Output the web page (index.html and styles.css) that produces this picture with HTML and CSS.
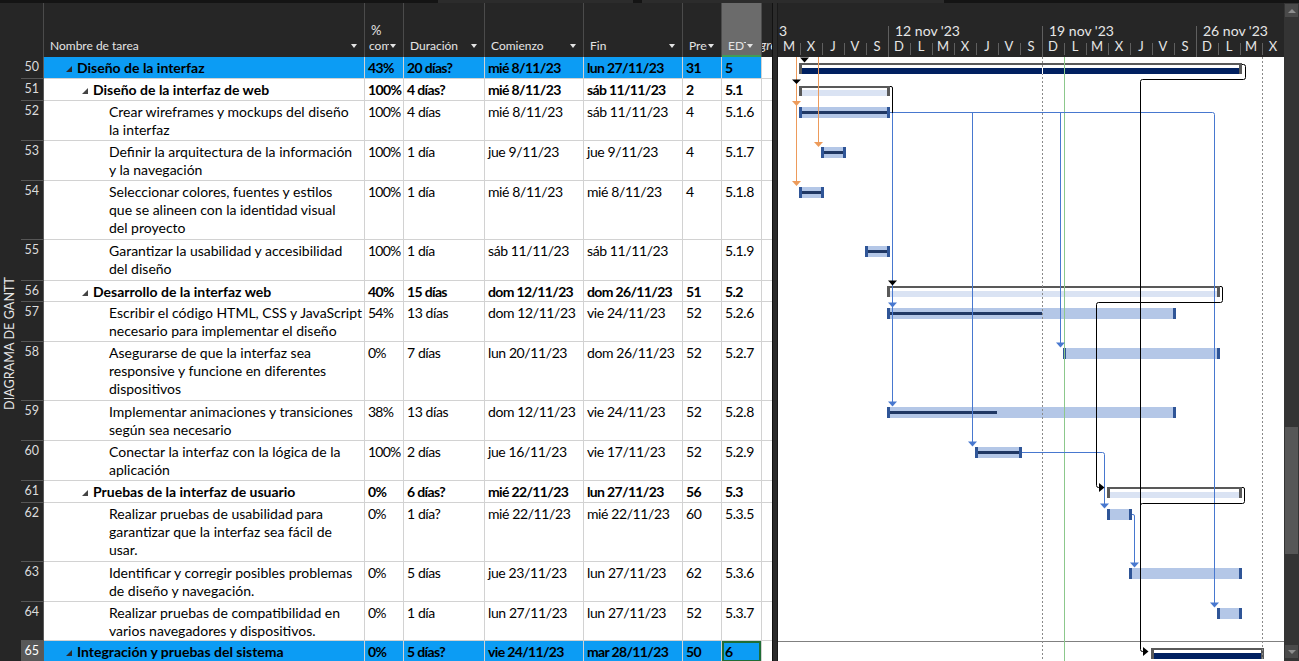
FILE: index.html
```html
<!DOCTYPE html>
<html lang="es">
<head>
<meta charset="utf-8">
<title>Diagrama de Gantt</title>
<link rel="stylesheet" href="styles.css">
</head>
<body>
<div class="app">
  <div class="topbar"><div class="seg seg1"></div><div class="seg seg2"></div></div>
  <div class="main">
    <div class="sheet">
      <div class="thead">
        <div class="corner"></div>
        <div class="th c-name"><div class="line"><span class="lbl">Nombre de tarea</span><span class="dd"></span></div></div>
        <div class="th c-pct"><div class="top">%</div><div class="line"><span class="lbl">completado</span><span class="dd"></span></div></div>
        <div class="th c-dur"><div class="line"><span class="lbl">Duración</span><span class="dd"></span></div></div>
        <div class="th c-start"><div class="line"><span class="lbl">Comienzo</span><span class="dd"></span></div></div>
        <div class="th c-fin"><div class="line"><span class="lbl">Fin</span><span class="dd"></span></div></div>
        <div class="th c-pre"><div class="line"><span class="lbl">Predecesoras</span><span class="dd"></span></div></div>
        <div class="th c-edt sel"><div class="line"><span class="lbl">EDT</span><span class="dd"></span></div></div>
        <div class="th c-add"><div class="line"><span class="lbl add">gre</span></div></div>
      </div>
      <div class="tbody">
        <div class="vlabel"><span>DIAGRAMA DE GANTT</span></div>
        <div class="rows">
          <div class="row h1 sel sum">
            <div class="num">50</div>
            <div class="td c-name l1"><span class="tri"></span>Diseño de la interfaz</div>
            <div class="td c-pct">43%</div><div class="td c-dur">20 días?</div><div class="td c-start">mié 8/11/23</div><div class="td c-fin">lun 27/11/23</div><div class="td c-pre">31</div><div class="td c-edt">5</div><div class="td c-add"></div>
          </div>
          <div class="row h1 sum">
            <div class="num">51</div>
            <div class="td c-name l2"><span class="tri"></span>Diseño de la interfaz de web</div>
            <div class="td c-pct">100%</div><div class="td c-dur">4 días?</div><div class="td c-start">mié 8/11/23</div><div class="td c-fin">sáb 11/11/23</div><div class="td c-pre">2</div><div class="td c-edt">5.1</div><div class="td c-add"></div>
          </div>
          <div class="row h2">
            <div class="num">52</div>
            <div class="td c-name l3">Crear wireframes y mockups del diseño<br>la interfaz</div>
            <div class="td c-pct">100%</div><div class="td c-dur">4 días</div><div class="td c-start">mié 8/11/23</div><div class="td c-fin">sáb 11/11/23</div><div class="td c-pre">4</div><div class="td c-edt">5.1.6</div><div class="td c-add"></div>
          </div>
          <div class="row h2">
            <div class="num">53</div>
            <div class="td c-name l3">Definir la arquitectura de la información<br>y la navegación</div>
            <div class="td c-pct">100%</div><div class="td c-dur">1 día</div><div class="td c-start">jue 9/11/23</div><div class="td c-fin">jue 9/11/23</div><div class="td c-pre">4</div><div class="td c-edt">5.1.7</div><div class="td c-add"></div>
          </div>
          <div class="row h3">
            <div class="num">54</div>
            <div class="td c-name l3">Seleccionar colores, fuentes y estilos<br>que se alineen con la identidad visual<br>del proyecto</div>
            <div class="td c-pct">100%</div><div class="td c-dur">1 día</div><div class="td c-start">mié 8/11/23</div><div class="td c-fin">mié 8/11/23</div><div class="td c-pre">4</div><div class="td c-edt">5.1.8</div><div class="td c-add"></div>
          </div>
          <div class="row h2 tall">
            <div class="num">55</div>
            <div class="td c-name l3">Garantizar la usabilidad y accesibilidad<br>del diseño</div>
            <div class="td c-pct">100%</div><div class="td c-dur">1 día</div><div class="td c-start">sáb 11/11/23</div><div class="td c-fin">sáb 11/11/23</div><div class="td c-pre"></div><div class="td c-edt">5.1.9</div><div class="td c-add"></div>
          </div>
          <div class="row h1 short sum">
            <div class="num">56</div>
            <div class="td c-name l2"><span class="tri"></span>Desarrollo de la interfaz web</div>
            <div class="td c-pct">40%</div><div class="td c-dur">15 días</div><div class="td c-start">dom 12/11/23</div><div class="td c-fin">dom 26/11/23</div><div class="td c-pre">51</div><div class="td c-edt">5.2</div><div class="td c-add"></div>
          </div>
          <div class="row h2">
            <div class="num">57</div>
            <div class="td c-name l3">Escribir el código HTML, CSS y JavaScript<br>necesario para implementar el diseño</div>
            <div class="td c-pct">54%</div><div class="td c-dur">13 días</div><div class="td c-start">dom 12/11/23</div><div class="td c-fin">vie 24/11/23</div><div class="td c-pre">52</div><div class="td c-edt">5.2.6</div><div class="td c-add"></div>
          </div>
          <div class="row h3">
            <div class="num">58</div>
            <div class="td c-name l3">Asegurarse de que la interfaz sea<br>responsive y funcione en diferentes<br>dispositivos</div>
            <div class="td c-pct">0%</div><div class="td c-dur">7 días</div><div class="td c-start">lun 20/11/23</div><div class="td c-fin">dom 26/11/23</div><div class="td c-pre">52</div><div class="td c-edt">5.2.7</div><div class="td c-add"></div>
          </div>
          <div class="row h2">
            <div class="num">59</div>
            <div class="td c-name l3">Implementar animaciones y transiciones<br>según sea necesario</div>
            <div class="td c-pct">38%</div><div class="td c-dur">13 días</div><div class="td c-start">dom 12/11/23</div><div class="td c-fin">vie 24/11/23</div><div class="td c-pre">52</div><div class="td c-edt">5.2.8</div><div class="td c-add"></div>
          </div>
          <div class="row h2">
            <div class="num">60</div>
            <div class="td c-name l3">Conectar la interfaz con la lógica de la<br>aplicación</div>
            <div class="td c-pct">100%</div><div class="td c-dur">2 días</div><div class="td c-start">jue 16/11/23</div><div class="td c-fin">vie 17/11/23</div><div class="td c-pre">52</div><div class="td c-edt">5.2.9</div><div class="td c-add"></div>
          </div>
          <div class="row h1 sum">
            <div class="num">61</div>
            <div class="td c-name l2"><span class="tri"></span>Pruebas de la interfaz de usuario</div>
            <div class="td c-pct">0%</div><div class="td c-dur">6 días?</div><div class="td c-start">mié 22/11/23</div><div class="td c-fin">lun 27/11/23</div><div class="td c-pre">56</div><div class="td c-edt">5.3</div><div class="td c-add"></div>
          </div>
          <div class="row h3">
            <div class="num">62</div>
            <div class="td c-name l3">Realizar pruebas de usabilidad para<br>garantizar que la interfaz sea fácil de<br>usar.</div>
            <div class="td c-pct">0%</div><div class="td c-dur">1 día?</div><div class="td c-start">mié 22/11/23</div><div class="td c-fin">mié 22/11/23</div><div class="td c-pre">60</div><div class="td c-edt">5.3.5</div><div class="td c-add"></div>
          </div>
          <div class="row h2">
            <div class="num">63</div>
            <div class="td c-name l3">Identificar y corregir posibles problemas<br>de diseño y navegación.</div>
            <div class="td c-pct">0%</div><div class="td c-dur">5 días</div><div class="td c-start">jue 23/11/23</div><div class="td c-fin">lun 27/11/23</div><div class="td c-pre">62</div><div class="td c-edt">5.3.6</div><div class="td c-add"></div>
          </div>
          <div class="row h2 short">
            <div class="num">64</div>
            <div class="td c-name l3">Realizar pruebas de compatibilidad en<br>varios navegadores y dispositivos.</div>
            <div class="td c-pct">0%</div><div class="td c-dur">1 día</div><div class="td c-start">lun 27/11/23</div><div class="td c-fin">lun 27/11/23</div><div class="td c-pre">52</div><div class="td c-edt">5.3.7</div><div class="td c-add"></div>
          </div>
          <div class="row h1 sel sum cur">
            <div class="num">65</div>
            <div class="td c-name l1"><span class="tri"></span>Integración y pruebas del sistema</div>
            <div class="td c-pct">0%</div><div class="td c-dur">5 días?</div><div class="td c-start">vie 24/11/23</div><div class="td c-fin">mar 28/11/23</div><div class="td c-pre">50</div><div class="td c-edt active">6</div><div class="td c-add"></div>
          </div>
        </div>
      </div>
    </div>

    <div class="splitter"></div>

    <div class="gantt">
      <div class="tscale">
        <div class="tier1">
          <div class="wk first">3</div>
          <div class="wk">12 nov '23</div>
          <div class="wk">19 nov '23</div>
          <div class="wk last">26 nov '23</div>
        </div>
        <div class="tier2">
          <div class="day nosep">M</div><div class="day">X</div><div class="day">J</div><div class="day">V</div><div class="day">S</div>
          <div class="day wk0">D</div><div class="day">L</div><div class="day">M</div><div class="day">X</div><div class="day">J</div><div class="day">V</div><div class="day">S</div>
          <div class="day wk0">D</div><div class="day">L</div><div class="day">M</div><div class="day">X</div><div class="day">J</div><div class="day">V</div><div class="day">S</div>
          <div class="day wk0">D</div><div class="day">L</div><div class="day">M</div><div class="day">X</div>
        </div>
      </div>
      <div class="chart">
        <svg class="chart-svg" width="506" height="604" viewBox="0 0 506 604">
          <g shape-rendering="crispEdges">
            <line x1="0" y1="584.5" x2="506" y2="584.5" stroke="#808080"/>
            <!-- row 50 summary -->
            <rect x="21" y="6" width="443" height="2" fill="#595959"/>
            <rect x="24" y="11" width="437" height="6" fill="#002060"/>
            <rect x="21" y="6" width="3" height="11" fill="#595959"/>
            <rect x="461" y="6" width="3" height="11" fill="#595959"/>
            <!-- row 51 summary -->
            <rect x="21" y="29" width="91" height="2" fill="#595959"/>
            <rect x="24" y="33" width="85" height="6" fill="#dae3f3"/>
            <rect x="21" y="29" width="3" height="10" fill="#595959"/>
            <rect x="109" y="29" width="3" height="10" fill="#595959"/>
            <!-- row 52 -->
            <rect x="21" y="50" width="91" height="11" fill="#b4c7e7"/>
            <rect x="24" y="54" width="85" height="3" fill="#203864"/>
            <rect x="21" y="50" width="3" height="11" fill="#2f5597"/>
            <rect x="109" y="50" width="3" height="11" fill="#2f5597"/>
            <!-- row 53 -->
            <rect x="43" y="90" width="25" height="11" fill="#b4c7e7"/>
            <rect x="46" y="94" width="19" height="3" fill="#203864"/>
            <rect x="43" y="90" width="3" height="11" fill="#2f5597"/>
            <rect x="65" y="90" width="3" height="11" fill="#2f5597"/>
            <!-- row 54 -->
            <rect x="21" y="130" width="25" height="11" fill="#b4c7e7"/>
            <rect x="24" y="134" width="19" height="3" fill="#203864"/>
            <rect x="21" y="130" width="3" height="11" fill="#2f5597"/>
            <rect x="43" y="130" width="3" height="11" fill="#2f5597"/>
            <!-- row 55 -->
            <rect x="87" y="189" width="25" height="11" fill="#b4c7e7"/>
            <rect x="90" y="193" width="19" height="3" fill="#203864"/>
            <rect x="87" y="189" width="3" height="11" fill="#2f5597"/>
            <rect x="109" y="189" width="3" height="11" fill="#2f5597"/>
            <!-- row 56 summary -->
            <rect x="109" y="229" width="333" height="2" fill="#595959"/>
            <rect x="112" y="234" width="327" height="6" fill="#dae3f3"/>
            <rect x="109" y="229" width="3" height="11" fill="#595959"/>
            <rect x="439" y="229" width="3" height="11" fill="#595959"/>
            <!-- row 57 -->
            <rect x="109" y="251" width="289" height="11" fill="#b4c7e7"/>
            <rect x="112" y="255" width="152" height="3" fill="#203864"/>
            <rect x="109" y="251" width="3" height="11" fill="#2f5597"/>
            <rect x="395" y="251" width="3" height="11" fill="#2f5597"/>
            <!-- row 58 -->
            <rect x="285" y="291" width="157" height="11" fill="#b4c7e7"/>
            <rect x="285" y="291" width="3" height="11" fill="#2f5597"/>
            <rect x="439" y="291" width="3" height="11" fill="#2f5597"/>
            <!-- row 59 -->
            <rect x="109" y="350" width="289" height="11" fill="#b4c7e7"/>
            <rect x="112" y="354" width="107" height="3" fill="#203864"/>
            <rect x="109" y="350" width="3" height="11" fill="#2f5597"/>
            <rect x="395" y="350" width="3" height="11" fill="#2f5597"/>
            <!-- row 60 -->
            <rect x="197" y="390" width="47" height="11" fill="#b4c7e7"/>
            <rect x="200" y="394" width="41" height="3" fill="#203864"/>
            <rect x="197" y="390" width="3" height="11" fill="#2f5597"/>
            <rect x="241" y="390" width="3" height="11" fill="#2f5597"/>
            <!-- row 61 summary -->
            <rect x="329" y="430" width="135" height="2" fill="#595959"/>
            <rect x="332" y="435" width="129" height="6" fill="#dae3f3"/>
            <rect x="329" y="430" width="3" height="11" fill="#595959"/>
            <rect x="461" y="430" width="3" height="11" fill="#595959"/>
            <!-- row 62 -->
            <rect x="329" y="452" width="25" height="11" fill="#b4c7e7"/>
            <rect x="329" y="452" width="3" height="11" fill="#2f5597"/>
            <rect x="351" y="452" width="3" height="11" fill="#2f5597"/>
            <!-- row 63 -->
            <rect x="351" y="511" width="113" height="11" fill="#b4c7e7"/>
            <rect x="351" y="511" width="3" height="11" fill="#2f5597"/>
            <rect x="461" y="511" width="3" height="11" fill="#2f5597"/>
            <!-- row 64 -->
            <rect x="439" y="551" width="25" height="11" fill="#b4c7e7"/>
            <rect x="439" y="551" width="3" height="11" fill="#2f5597"/>
            <rect x="461" y="551" width="3" height="11" fill="#2f5597"/>
            <!-- row 65 summary -->
            <rect x="373" y="591" width="113" height="2" fill="#595959"/>
            <rect x="376" y="596" width="107" height="6" fill="#002060"/>
            <rect x="373" y="591" width="3" height="11" fill="#595959"/>
            <rect x="483" y="591" width="3" height="11" fill="#595959"/>
            <!-- gridlines -->
            <line x1="264.5" y1="0" x2="264.5" y2="604" stroke="#8a8a8a" stroke-dasharray="2 2"/>
            <line x1="484.5" y1="0" x2="484.5" y2="604" stroke="#8a8a8a" stroke-dasharray="2 2"/>
            <rect x="264" y="11" width="1" height="6" fill="#ffffff"/>
            <line x1="286.5" y1="0" x2="286.5" y2="604" stroke="#8cc88c"/>
          </g>
          <g fill="none" stroke-width="1">
            <path d="M18.5 0V124M40.5 0V85" stroke="#ed9b5b"/>
            <path d="M112 55.5H434.5Q436.5 55.5 436.5 57.5V546M114.5 55.5V345M194.5 55.5V385M282.5 55.5V286" stroke="#4878cf"/>
            <path d="M244 395.5H324.5Q326.5 395.5 326.5 397.5V447" stroke="#4878cf"/>
            <path d="M354 457.5H355Q356.5 457.5 356.5 459V506" stroke="#4878cf"/>
            <path d="M112 29.5H113Q114.5 29.5 114.5 31V56" stroke="#000"/>
            <path d="M464 7.5H465.5Q467.5 7.5 467.5 9.5V20.5Q467.5 22.5 465.5 22.5H364.5Q362.5 22.5 362.5 24.5V592.5Q362.5 594.5 364.5 594.5H366" stroke="#000"/>
            <path d="M442 229.5H443Q444.5 229.5 444.5 231V243.5Q444.5 245.5 442.5 245.5H320.5Q318.5 245.5 318.5 247.5V428.5Q318.5 430.5 320.5 430.5H322" stroke="#000"/>
            <path d="M464 430.5H465Q466.5 430.5 466.5 432V444.5Q466.5 446.5 464.5 446.5H364.5Q362.5 446.5 362.5 448.5" stroke="#000"/>
          </g>
          <g>
            <polygon points="14,44 23,44 18.5,49" fill="#ed9b5b"/>
            <polygon points="14,124 23,124 18.5,129" fill="#ed9b5b"/>
            <polygon points="36,85 45,85 40.5,90" fill="#ed9b5b"/>
            <polygon points="22,0.5 31,0.5 26.5,5.5" fill="#000"/>
            <polygon points="14,22.5 23,22.5 18.5,27" fill="#000"/>
            <polygon points="110,223.5 119,223.5 114.5,228.5" fill="#000"/>
            <polygon points="321,426 321,435 326.5,430.5" fill="#000"/>
            <polygon points="365,590 365,599 370.5,594.5" fill="#000"/>
            <polygon points="110,245.5 119,245.5 114.5,250.5" fill="#4878cf"/>
            <polygon points="110,344.5 119,344.5 114.5,349.5" fill="#4878cf"/>
            <polygon points="190,384.5 199,384.5 194.5,389.5" fill="#4878cf"/>
            <polygon points="278,285.5 287,285.5 282.5,290.5" fill="#4878cf"/>
            <polygon points="432,545.5 441,545.5 436.5,550.5" fill="#4878cf"/>
            <polygon points="322,446.5 331,446.5 326.5,451.5" fill="#4878cf"/>
            <polygon points="352,505.5 361,505.5 356.5,510.5" fill="#4878cf"/>
          </g>
        </svg>
      </div>
    </div>

    <div class="vscroll">
      <div class="sb-btn up"><span class="sb-arrow up"></span></div>
      <div class="sb-thumb"></div>
      <div class="sb-btn down"><span class="sb-arrow down"></span></div>
    </div>
  </div>
</div>
</body>
</html>
```

FILE: styles.css
```css
* { box-sizing: border-box; }

html, body {
  margin: 0;
  padding: 0;
}

body {
  width: 1299px;
  height: 661px;
  overflow: hidden;
  background: #262626;
  font-family: Lato, "Liberation Sans", sans-serif;
}

.app {
  display: flex;
  flex-direction: column;
  width: 1299px;
  height: 661px;
}

/* thin strip on top */
.topbar {
  height: 3px;
  background: #141414;
  display: flex;
  flex: none;
}
.topbar .seg { background: #2c2c2c; }
.topbar .seg1 { margin-left: 438px; width: 195px; }
.topbar .seg2 { margin-left: 9px; width: 302px; }

.main {
  display: flex;
  height: 658px;
}

/* ---------- sheet ---------- */
.sheet {
  width: 772px;
  flex: none;
  display: flex;
  flex-direction: column;
}

.thead {
  height: 54px;
  flex: none;
  display: flex;
  background: #262626;
}

.corner {
  width: 44px;
  flex: none;
  border-right: 1px solid #4b4b4b;
}

.th {
  flex: none;
  display: flex;
  flex-direction: column;
  justify-content: flex-end;
  padding: 0 0 3px 6px;
  border-right: 1px solid #4b4b4b;
  color: #e4e4e4;
  font-size: 12px;
  overflow: hidden;
}
.th .top {
  line-height: 18px;
  margin-bottom: -3px;
  padding-left: 2px;
  font-size: 13px;
}
.th .line {
  display: flex;
  align-items: center;
  height: 18px;
}
.th .lbl {
  flex: 1;
  min-width: 0;
  overflow: hidden;
  white-space: nowrap;
}
.th .lbl.add {
  font-style: italic;
  margin-left: -2px;
}
.dd {
  flex: none;
  width: 0;
  height: 0;
  border-left: 3.5px solid transparent;
  border-right: 3.5px solid transparent;
  border-top: 4px solid #e4e4e4;
  margin: 2px 7px 0 1px;
}
.th.c-pct { padding-left: 4px; }
.th.sel {
  background: #6b6b6b;
  box-shadow: inset 0 -2px 0 #3f9d57;
}
.th.sel .dd { margin-right: 8px; }
.th.c-add {
  padding-left: 0;
  border-right: none;
  font-size: 13px;
}

/* column widths */
.c-name  { width: 321px; }
.c-pct   { width: 39px; }
.c-dur   { width: 81px; }
.c-start { width: 99px; }
.c-fin   { width: 99px; }
.c-pre   { width: 39px; }
.c-edt   { width: 40px; }
.c-add   { width: 10px; }

.tbody {
  flex: 1;
  display: flex;
  min-height: 0;
}

.vlabel {
  width: 21px;
  flex: none;
  background: #262626;
  display: flex;
  align-items: center;
  justify-content: center;
  padding: 0 2px 32px 0;
}
.vlabel span {
  writing-mode: vertical-rl;
  transform: rotate(180deg);
  color: #e6e6e6;
  font-size: 12.5px;
  letter-spacing: 0.1px;
  white-space: nowrap;
}

.rows {
  flex: 1;
  display: flex;
  flex-direction: column;
  overflow: hidden;
  background: #fff;
}

.row {
  display: flex;
  flex: none;
  height: 22px;
}
.row.h2 { height: 40px; }
.row.h3 { height: 59px; }
.row.h2.tall { height: 41px; }
.row.h1.short { height: 21px; }
.row.h2.short { height: 39px; }

.num {
  width: 23px;
  flex: none;
  background: #262626;
  color: #dcdcdc;
  font-size: 12.5px;
  line-height: 18px;
  text-align: right;
  padding: 1px 4px 0 0;
  border-bottom: 1px solid #565656;
  border-right: 1px solid #5a5a5a;
}
.row.cur .num {
  background: #585858;
  color: #ffffff;
}

.td {
  flex: none;
  background: #fff;
  color: #000;
  font-size: 14px;
  line-height: 18px;
  padding: 2px 0 0 3px;
  white-space: nowrap;
  overflow: hidden;
  border-right: 1px solid #d2d2d2;
  border-bottom: 1px solid #d2d2d2;
  letter-spacing: -0.4px;
}
.td.c-name { letter-spacing: 0; }
.td.c-pct { letter-spacing: -0.8px; }
.td.c-name.l1 { padding-left: 22px; }
.td.c-name.l2 { padding-left: 38px; }
.td.c-name.l3 { padding-left: 65px; }
.td.c-add { border-right: none; }

.row.sum .td { font-weight: 700; letter-spacing: -0.65px; }
.row.sum .td.c-name { letter-spacing: 0; }
.row.sel .td { background: #0c9cf4; }
.row.sel .td.c-add { background: #fff; }
.td.active { box-shadow: inset 0 0 0 2px #1f6d35; }

.tri {
  display: inline-block;
  width: 6px;
  height: 6px;
  margin-right: 5px;
  vertical-align: 1px;
  background: #444;
  clip-path: polygon(100% 0, 100% 100%, 0 100%);
}
.row.sel .tri { background: #2a2a2a; }

/* ---------- splitter ---------- */
.splitter {
  width: 6px;
  flex: none;
  background: #2b2b2b;
  border-left: 1px solid #121212;
  border-right: 1px solid #1a1a1a;
}

/* ---------- gantt ---------- */
.gantt {
  width: 506px;
  flex: none;
  display: flex;
  flex-direction: column;
}

.tscale {
  height: 54px;
  flex: none;
  background: #262626;
  color: #e6e6e6;
  font-size: 13px;
  overflow: hidden;
}
.tier1 {
  height: 36px;
  display: flex;
  align-items: flex-end;
  font-size: 14px;
}
.wk {
  flex: none;
  width: 154px;
  height: 13px;
  border-left: 1px solid #5f5f5f;
  padding-left: 6px;
  line-height: 9px;
  white-space: nowrap;
  overflow: hidden;
}
.wk.first {
  width: 110px;
  border-left: none;
  padding-left: 1px;
}
.wk.last { width: 88px; }

.tier2 {
  height: 18px;
  display: flex;
}
.day {
  flex: none;
  width: 22px;
  position: relative;
  text-align: center;
  line-height: 14px;
}
.day::before {
  content: "";
  position: absolute;
  left: 0;
  top: 4px;
  width: 1px;
  height: 12px;
  background: #5f5f5f;
}
.day.wk0::before { top: 0; height: 18px; }
.day.nosep::before { display: none; }

.chart {
  flex: 1;
  background: #fff;
  overflow: hidden;
}
.chart-svg { display: block; }

/* ---------- scrollbar ---------- */
.vscroll {
  width: 15px;
  flex: none;
  background: #343434;
  display: flex;
  flex-direction: column;
  padding: 1px 1px 0 1px;
}
.sb-btn {
  height: 13px;
  flex: none;
  background: #4a4a4a;
  display: flex;
  align-items: center;
  justify-content: center;
}
.sb-arrow {
  width: 0;
  height: 0;
  border-left: 4px solid transparent;
  border-right: 4px solid transparent;
}
.sb-arrow.up { border-bottom: 4px solid #8e8e8e; }
.sb-arrow.down { border-top: 4px solid #8e8e8e; }
.sb-thumb {
  margin-top: 410px;
  height: 127px;
  flex: none;
  background: #575757;
}
.sb-btn.down { margin-top: 91px; }
```
